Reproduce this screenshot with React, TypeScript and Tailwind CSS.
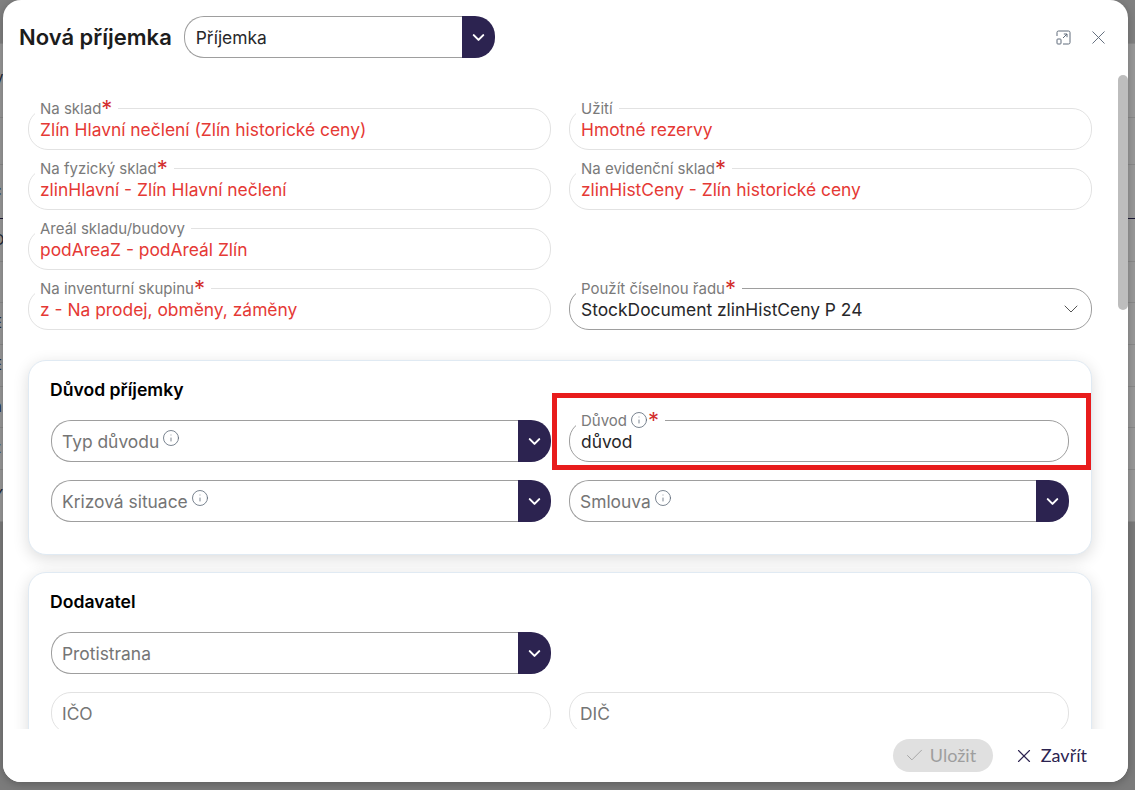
import { ReactNode } from "react";
import { Check, ChevronDown, Info, X } from "lucide-react";

const font = "font-['Inter',sans-serif]";

function Star() {
  return <span className="-mt-[2px] text-[22px] leading-[14px] text-[#d32f2f]">*</span>;
}

function Hint() {
  return <Info size={18} strokeWidth={1.1} className="text-[#5f6b7a]" />;
}

function Field({
  label,
  value,
  required,
  hint,
  active,
  muted,
  className = "",
  children,
}: {
  label?: string;
  value?: string;
  required?: boolean;
  hint?: boolean;
  active?: boolean;
  muted?: boolean;
  className?: string;
  children?: ReactNode;
}) {
  return (
    <div
      className={`relative flex h-[42px] items-center rounded-[20px] border ${
        muted ? "px-[10px]" : "px-[11px]"
      } ${active ? "border-[#9e9e9e]" : "border-[#e2e2e2]"} ${className}`}
    >
      {label ? (
        <div className="absolute -top-[8px] left-[6px] flex h-[16px] items-center bg-white pl-[5px] pr-[6px] text-[15px] text-[#7a7a7a]">
          <span>{label}</span>
          {hint ? <span className="ml-[3px] -mt-[2px]"><Hint /></span> : null}
          {required ? <Star /> : null}
        </div>
      ) : null}
      <span className={`mt-[2px] text-[17.4px] ${muted ? "text-[#757575]" : "text-[#e53935]"}`}>
        {value}
      </span>
      {children}
    </div>
  );
}

function Select({
  placeholder,
  value,
  hint,
  className = "",
}: {
  placeholder?: string;
  value?: string;
  hint?: boolean;
  className?: string;
}) {
  return (
    <div className={`flex h-[42px] ${className}`}>
      <div
        className={`flex min-w-0 flex-1 items-center gap-[3px] rounded-l-[20px] border border-r-0 border-[#9e9e9e] ${
          value ? "pl-[11px]" : "pl-[10px]"
        }`}
      >
        <span className={`mt-[2px] text-[17.4px] ${value ? "text-[#27272a]" : "text-[#757575]"}`}>
          {value ?? placeholder}
        </span>
        {hint ? <span className="-mt-[6px]"><Hint /></span> : null}
      </div>
      <div className="flex w-[33px] items-center justify-center rounded-r-[20px] bg-[#2c2350] text-white">
        <ChevronDown size={19} strokeWidth={2.6} />
      </div>
    </div>
  );
}

function Backdrop() {
  const rows = [
    { h: 44, text: "" },
    { h: 74, text: "V" },
    { h: 47, text: "" },
    { h: 54, text: "c", dark: true },
    { h: 43, text: "O" },
    { h: 41, text: "" },
    { h: 42, text: "E" },
    { h: 42, text: "E" },
    { h: 41, text: "n" },
    { h: 42, text: "z" },
    { h: 52, text: "Y" },
  ];
  return (
    <div className="flex flex-col">
      {rows.map((row, i) => (
        <div
          key={i}
          style={{ height: row.h }}
          className={`flex items-center overflow-hidden border-b text-[15px] text-[#1f2937] ${
            row.dark ? "border-[#1a1735]" : "border-[#8a8a8a]"
          } ${i === 0 ? "bg-[#808080]" : ""}`}
        >
          <span className="-ml-[7px]">{row.text}</span>
        </div>
      ))}
    </div>
  );
}

export default function App() {
  return (
    <div className={`relative h-[790px] w-[1135px] overflow-hidden bg-[#7b7b7b] ${font}`}>
      <div className="h-[522px] bg-[#999999]">
        <Backdrop />
      </div>

      <div className="absolute left-[3px] top-0 flex h-[782px] w-[1125px] flex-col overflow-hidden rounded-[18px] bg-white shadow-[0_2px_8px_rgba(0,0,0,0.25)]">
        <header className="flex h-[75px] shrink-0 items-start pl-[16px] pr-[18px] pt-[16px]">
          <h1 className="mr-[12px] flex h-[42px] items-center text-[22px] font-semibold text-[#1c1c1c]">
            Nová příjemka
          </h1>
          <Select value="Příjemka" className="w-[311px]" />
          <div className="ml-auto flex h-[42px] items-center gap-[16px] text-[#5f6b7a]">
            <svg width="15" height="15" viewBox="0 0 15 15" fill="none" stroke="currentColor" strokeWidth="1">
              <path d="M1 6V2.5A1.5 1.5 0 0 1 2.5 1h10A1.5 1.5 0 0 1 14 2.5v10a1.5 1.5 0 0 1-1.5 1.5H7" />
              <rect x="1" y="9" width="4" height="5" rx="0.8" />
              <path d="M7 8l4-4M7.8 4H11v3.2" />
            </svg>
            <X size={23} strokeWidth={1} />
          </div>
        </header>

        <div className="relative min-h-0 flex-1 overflow-hidden pl-[25px] pr-[36px] pt-[33px]">
          <div className="grid grid-cols-2 gap-x-[18px] gap-y-[18px]">
            <Field label="Na sklad" required value="Zlín Hlavní nečlení (Zlín historické ceny)" />
            <Field label="Užití" value="Hmotné rezervy" />
            <Field label="Na fyzický sklad" required value="zlinHlavní - Zlín Hlavní nečlení" />
            <Field label="Na evidenční sklad" required value="zlinHistCeny - Zlín historické ceny" />
            <Field label="Areál skladu/budovy" value="podAreaZ - podAreál Zlín" />
            <div />
            <Field label="Na inventurní skupinu" required value="z - Na prodej, obměny, záměny" />
            <Field label="Použít číselnou řadu" required active>
              <span className="absolute left-[11px] top-[8px] text-[17.4px] text-[#27272a]">
                StockDocument zlinHistCeny P 24
              </span>
              <ChevronDown size={24} strokeWidth={1} className="absolute right-[8px] top-[8px] text-[#555555]" />
            </Field>
          </div>

          <section className="mt-[30px] h-[195px] rounded-[18px] border border-[#e0eaf3] bg-white px-[22px] pt-[18px] shadow-[0_4px_16px_rgba(0,0,0,0.14)]">
            <h2 className="-ml-[1px] h-[22px] text-[17.6px] leading-[22px] font-semibold text-black">Důvod příjemky</h2>
            <div className="mt-[19px] grid grid-cols-2 gap-x-[18px] gap-y-[18px]">
              <Select placeholder="Typ důvodu" hint />
              <div className="relative">
                <Field label="Důvod" hint required active muted>
                  <span className="absolute left-[11px] top-[8px] text-[17.4px] text-[#27272a]">důvod</span>
                </Field>
                <div className="absolute -left-[17px] -right-[22px] -top-[27px] h-[77px] border-[5px] border-[#e81c1c]" />
              </div>
              <Select placeholder="Krizová situace" hint />
              <Select placeholder="Smlouva" hint />
            </div>
          </section>

          <section className="mt-[17px] h-[300px] rounded-[18px] border border-[#e0eaf3] bg-white px-[22px] pt-[18px] shadow-[0_4px_16px_rgba(0,0,0,0.14)]">
            <h2 className="-ml-[1px] h-[22px] text-[17.6px] leading-[22px] font-semibold text-black">Dodavatel</h2>
            <div className="mt-[19px] grid grid-cols-2 gap-x-[18px] gap-y-[18px]">
              <Select placeholder="Protistrana" />
              <div />
              <Field muted value="IČO" />
              <Field muted value="DIČ" />
            </div>
          </section>

          <div className="absolute right-0 top-0 h-[235px] w-[10px] rounded-full bg-[#bdbdbd]" />
        </div>

        <footer className="flex h-[53px] shrink-0 items-start justify-end bg-white pr-[41px] pt-[10px] font-['Lato',sans-serif]">
          <button className="flex h-[33px] w-[100px] items-center gap-[5px] rounded-full bg-[#e0e0e0] pl-[11px] text-[18px] text-[#9e9e9e]">
            <Check size={21} strokeWidth={1} />
            Uložit
          </button>
          <button className="ml-[20px] flex h-[33px] items-center gap-[6px] text-[18px] text-[#2c2350]">
            <X size={22} strokeWidth={1.25} />
            Zavřít
          </button>
        </footer>
      </div>
    </div>
  );
}
